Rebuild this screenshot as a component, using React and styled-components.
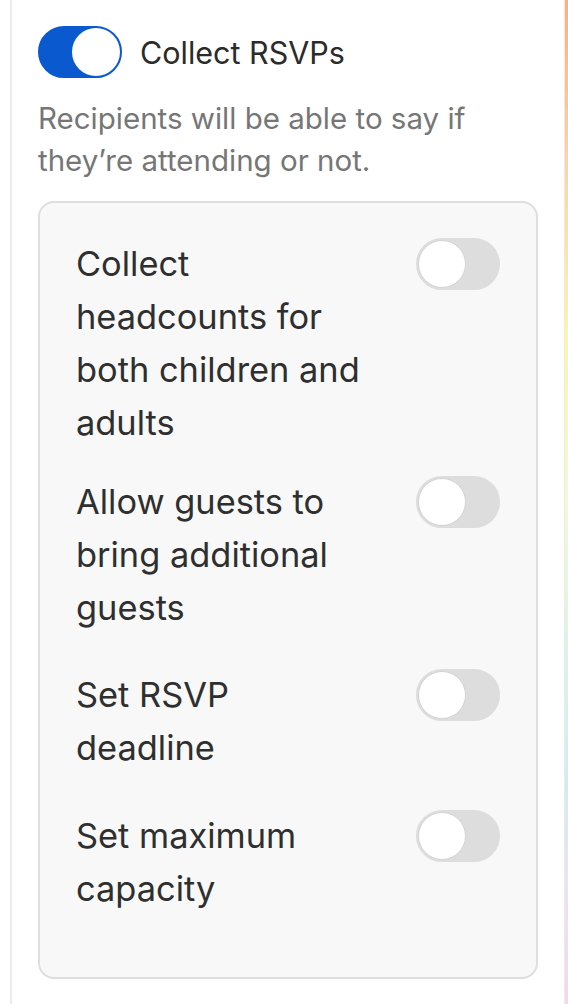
import React from 'react';
import styled, { createGlobalStyle } from 'styled-components';

const GlobalStyle = createGlobalStyle`
  body {
    margin: 0;
    background: #ffffff;
    font-family: Inter, "Liberation Sans", sans-serif;
  }
`;

const Page = styled.div`
  display: flex;
  width: 568px;
  min-height: 1004px;
  padding-left: 10px;
  box-sizing: border-box;
`;

const Panel = styled.div`
  flex: 1;
  border-left: 2px solid #ebebeb;
  border-right: 1px solid #ebebeb;
  padding: 26px 26px 0 26px;
  display: flex;
  flex-direction: column;
`;

const Stripe = styled.div`
  width: 3px;
  background: linear-gradient(
    180deg,
    #ffae78 0%,
    #ffd3a0 16%,
    #fff89a 34%,
    #f2fbcf 50%,
    #d9f6e4 64%,
    #cdeef1 78%,
    #e8e3f7 88%,
    #f8d5ef 100%
  );
`;

const Header = styled.div`
  display: flex;
  align-items: center;
  gap: 18px;
`;

const Title = styled.span`
  font-size: 30.5px;
  font-weight: 400;
  color: #2b2b2b;
`;

const Description = styled.p`
  margin: 19px 0 0;
  font-size: 29.5px;
  line-height: 42px;
  color: #767676;
  max-width: 450px;
`;

const Card = styled.div`
  margin-top: 20px;
  border: 2px solid #dedede;
  border-radius: 16px;
  background: #f8f8f8;
  padding: 34px 36px 62px;
  display: flex;
  flex-direction: column;
`;

const Row = styled.div`
  display: flex;
  justify-content: space-between;
  align-items: flex-start;
  gap: 40px;
  margin-top: ${(p) => p.$space}px;
`;

const RowLabel = styled.span`
  flex: 1;
  max-width: 296px;
  font-size: 34.4px;
  line-height: 53px;
  color: #2f2f2f;
`;

const Track = styled.div`
  flex: none;
  width: 84px;
  height: 52px;
  box-sizing: border-box;
  border-radius: 26px;
  border: 2px solid ${(p) => (p.$on ? '#0a59cf' : '#dddddd')};
  background: ${(p) => (p.$on ? '#0a59cf' : '#dddddd')};
  display: flex;
  justify-content: ${(p) => (p.$on ? 'flex-end' : 'flex-start')};
  margin-top: ${(p) => (p.$inset ? '1px' : '0')};
`;

const Knob = styled.div`
  width: 48px;
  height: 48px;
  border-radius: 50%;
  background: #ffffff;
  box-sizing: border-box;
  border: ${(p) => (p.$on ? 'none' : '1px solid #d4d4d4')};
`;

const Toggle = ({ on, inset }) => (
  <Track $on={on} $inset={inset}>
    <Knob $on={on} />
  </Track>
);

const options = [
  { label: 'Collect headcounts for both children and adults', space: 0 },
  { label: 'Allow guests to bring additional guests', space: 26 },
  { label: 'Set RSVP deadline', space: 34 },
  { label: 'Set maximum capacity', space: 35 },
];

const App = () => (
  <>
    <GlobalStyle />
    <Page>
      <Panel>
        <Header>
          <Toggle on />
          <Title>Collect RSVPs</Title>
        </Header>
        <Description>
          Recipients will be able to say if they’re attending or not.
        </Description>
        <Card>
          {options.map((o) => (
            <Row key={o.label} $space={o.space}>
              <RowLabel>{o.label}</RowLabel>
              <Toggle inset />
            </Row>
          ))}
        </Card>
      </Panel>
      <Stripe />
    </Page>
  </>
);

export default App;
